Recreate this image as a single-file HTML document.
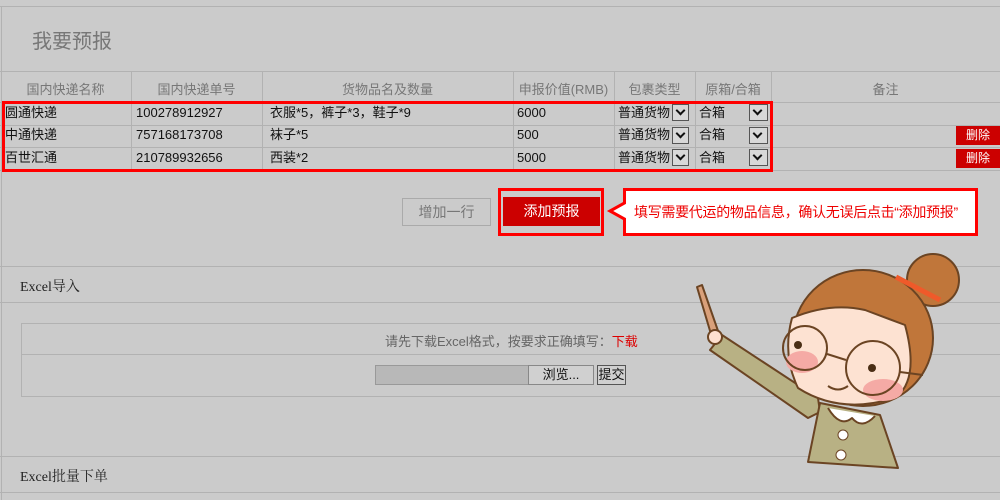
<!DOCTYPE html>
<html><head><meta charset="utf-8"><style>
body{margin:0;width:1000px;height:500px;background:#cbcbcb;position:relative;overflow:hidden;font-family:"Liberation Sans","Noto Sans CJK SC",sans-serif;font-size:13px;color:#111}
.a{position:absolute}
.hl{position:absolute;left:0;width:1000px;height:1px;background:#b2b2b2}
.vl{position:absolute;width:1px;background:#b2b2b2}
.c{position:absolute;white-space:nowrap}
.r{position:absolute;white-space:nowrap;height:22px;line-height:22px}
.sel{position:absolute;width:17px;height:17px;border:1px solid #555;background:#d8d8d8;box-sizing:border-box}
.sel:after{content:"";position:absolute;left:4px;top:2px;width:5px;height:5px;border-right:2px solid #111;border-bottom:2px solid #111;transform:rotate(45deg)}
.del{position:absolute;left:956px;width:44px;height:19px;background:#c00;color:#fff;font-size:12px;line-height:19px;text-align:center}
</style></head><body>
<div class="hl" style="top:6px"></div>
<div class="vl" style="left:1px;top:6px;height:494px"></div>
<div class="c" style="left:32px;top:25px;font-size:20px;color:#777">我要预报</div>
<div class="hl" style="top:71px"></div>
<div class="hl" style="top:102px"></div>
<div class="hl" style="top:125px"></div>
<div class="hl" style="top:147px"></div>
<div class="hl" style="top:170px"></div>
<div class="vl" style="left:131px;top:71px;height:99px"></div>
<div class="vl" style="left:262px;top:71px;height:99px"></div>
<div class="vl" style="left:513px;top:71px;height:99px"></div>
<div class="vl" style="left:614px;top:71px;height:99px"></div>
<div class="vl" style="left:695px;top:71px;height:99px"></div>
<div class="vl" style="left:771px;top:71px;height:99px"></div>
<div class="c" style="left:0;width:131px;text-align:center;top:79px;color:#777">国内快递名称</div>
<div class="c" style="left:131px;width:131px;text-align:center;top:79px;color:#777">国内快递单号</div>
<div class="c" style="left:262px;width:251px;text-align:center;top:79px;color:#777">货物品名及数量</div>
<div class="c" style="left:513px;width:101px;text-align:center;top:79px;color:#777">申报价值(RMB)</div>
<div class="c" style="left:614px;width:81px;text-align:center;top:79px;color:#777">包裹类型</div>
<div class="c" style="left:695px;width:76px;text-align:center;top:79px;color:#777">原箱/合箱</div>
<div class="c" style="left:771px;width:229px;text-align:center;top:79px;color:#777">备注</div>

<div class="r" style="left:5px;top:102px">圆通快递</div>
<div class="r" style="left:136px;top:102px">100278912927</div>
<div class="r" style="left:270px;top:102px">衣服*5，裤子*3，鞋子*9</div>
<div class="r" style="left:517px;top:102px">6000</div>
<div class="r" style="left:618px;top:102px">普通货物</div><div class="sel" style="left:672px;top:104px"></div>
<div class="r" style="left:699px;top:102px">合箱</div><div class="sel" style="left:749px;top:104px;width:19px"></div>

<div class="r" style="left:5px;top:124px">中通快递</div>
<div class="r" style="left:136px;top:124px">757168173708</div>
<div class="r" style="left:270px;top:124px">袜子*5</div>
<div class="r" style="left:517px;top:124px">500</div>
<div class="r" style="left:618px;top:124px">普通货物</div><div class="sel" style="left:672px;top:127px"></div>
<div class="r" style="left:699px;top:124px">合箱</div><div class="sel" style="left:749px;top:127px;width:19px"></div>
<div class="del" style="top:126px">删除</div>

<div class="r" style="left:5px;top:147px">百世汇通</div>
<div class="r" style="left:136px;top:147px">210789932656</div>
<div class="r" style="left:270px;top:147px">西装*2</div>
<div class="r" style="left:517px;top:147px">5000</div>
<div class="r" style="left:618px;top:147px">普通货物</div><div class="sel" style="left:672px;top:149px"></div>
<div class="r" style="left:699px;top:147px">合箱</div><div class="sel" style="left:749px;top:149px;width:19px"></div>
<div class="del" style="top:149px">删除</div>

<div class="a" style="left:2px;top:101px;width:765px;height:65px;border:3px solid #f00"></div>

<div class="a" style="left:402px;top:198px;width:87px;height:26px;border:1px solid #aaa;color:#777;font-size:14px;line-height:26px;text-align:center">增加一行</div>
<div class="a" style="left:498px;top:188px;width:100px;height:42px;border:3px solid #f00"></div>
<div class="a" style="left:503px;top:197px;width:97px;height:29px;background:#c00;color:#fff;font-size:14px;line-height:29px;text-align:center">添加预报</div>
<svg class="a" style="left:605px;top:186px" width="376" height="52"><path d="M19.5 3.5H371.5V48.5H19.5V33L5 25L19.5 17Z" fill="#fff" stroke="#f00" stroke-width="3"/></svg>
<div class="c" style="left:634px;top:202px;color:#e00;font-size:14px;letter-spacing:-0.3px">填写需要代运的物品信息，确认无误后点击“添加预报”</div>

<div class="hl" style="top:266px"></div>
<div class="c" style="left:20px;top:276px;font-family:'Liberation Serif','Noto Serif CJK SC',serif;font-size:14px;color:#222">Excel导入</div>
<div class="hl" style="top:302px"></div>
<div class="a" style="left:21px;top:323px;width:990px;height:72px;border:1px solid #b2b2b2"></div>
<div class="hl" style="top:354px;left:21px"></div>
<div class="c" style="left:385px;top:331px;color:#666;font-size:13px">请先下载Excel格式，按要求正确填写：<span style="color:#d00">下载</span></div>
<div class="a" style="left:375px;top:365px;width:152px;height:18px;background:#b8b8b8;border:1px solid #999"></div>
<div class="a" style="left:528px;top:365px;width:64px;height:18px;background:#d0d0d0;border:1px solid #888;text-align:center;line-height:18px;font-size:13px">浏览...</div>
<div class="a" style="left:597px;top:365px;width:27px;height:18px;background:#d0d0d0;border:1px solid #555;text-align:center;line-height:18px;font-size:13px">提交</div>

<div class="hl" style="top:456px"></div>
<div class="c" style="left:20px;top:466px;font-family:'Liberation Serif','Noto Serif CJK SC',serif;font-size:14px;color:#222">Excel批量下单</div>
<div class="hl" style="top:492px"></div>

<svg class="a" style="left:680px;top:240px" width="320" height="260" viewBox="0 0 320 260">
<g stroke="#6b4423" stroke-width="2" stroke-linejoin="round">
<circle cx="253" cy="40" r="26" fill="#c0763a"/>
<path d="M22 45 L44 108 L36 111 L17 47Z" fill="#d9a07a"/>
<path d="M42 95 L138 158 L140 172 L128 178 L30 110Z" fill="#b8b184"/>
<circle cx="35" cy="97" r="7" fill="#fde0cf"/>
<path d="M140 163 L200 175 L218 228 L128 222Z" fill="#b8b184"/>
<ellipse cx="183" cy="98" rx="70" ry="68" fill="#c0763a"/>
<path d="M112 78 Q150 62 185 70 L225 85 Q240 140 215 158 Q160 175 118 148 Q102 115 112 78Z" fill="#fde2d2"/>
<path d="M148 168 Q160 188 172 178 Q182 190 195 176" fill="#fff"/>
</g>
<ellipse cx="122" cy="122" rx="16" ry="11" fill="#f5aaa5"/>
<ellipse cx="203" cy="150" rx="20" ry="11" fill="#f5aaa5"/>
<g fill="none" stroke="#6b4423" stroke-width="2">
<circle cx="125" cy="108" r="22"/><circle cx="193" cy="128" r="27"/>
<path d="M147 114 L166 120 M220 132 L243 135 M148 146 Q158 153 168 146"/>
</g>
<path d="M216 37 L260 60" stroke="#ef5a2a" stroke-width="5"/>
<circle cx="118" cy="105" r="4" fill="#4a2e15"/><circle cx="192" cy="128" r="4" fill="#4a2e15"/>
<circle cx="163" cy="195" r="5" fill="#fff" stroke="#6b4423"/><circle cx="161" cy="215" r="5" fill="#fff" stroke="#6b4423"/>
</svg>
</body></html>
